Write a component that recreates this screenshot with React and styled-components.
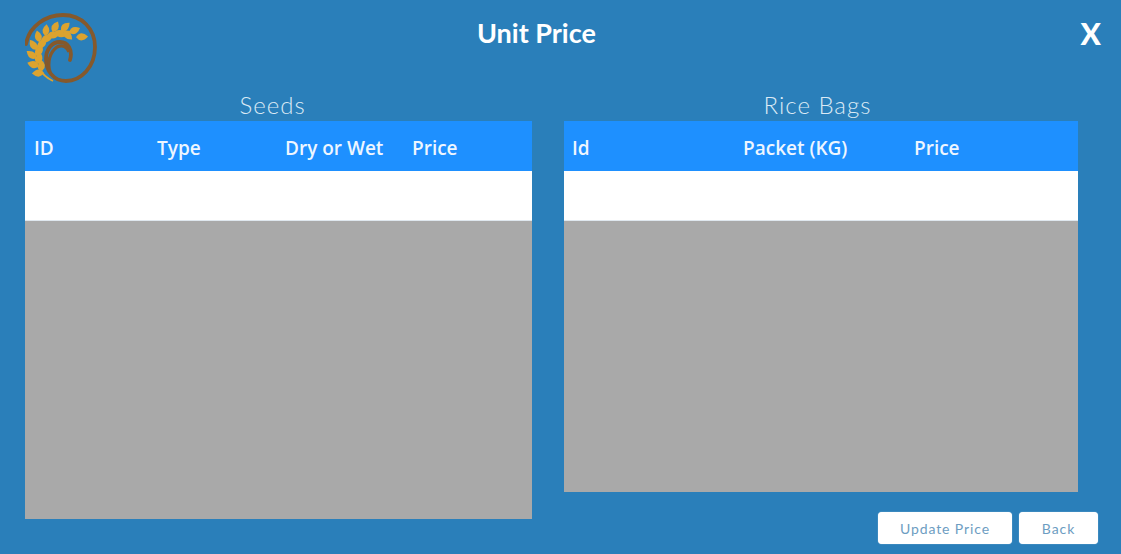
import React from "react";
import styled, { createGlobalStyle } from "styled-components";

const GlobalStyle = createGlobalStyle`
    html, body {
        margin: 0;
        padding: 0;
        background: #2a7fba;
    }
`;

const Page = styled.div`
    width: 1121px;
    height: 554px;
    overflow: hidden;
    background: #2a7fba;
    font-family: "Lato", "Open Sans", sans-serif;
    display: flex;
    flex-direction: column;
`;

const Header = styled.div`
    height: 91px;
    padding: 13px 20px 0 25px;
    box-sizing: border-box;
    display: grid;
    grid-template-columns: 452px 1fr auto;
    align-items: start;
`;

const Logo = styled.svg`
    width: 74px;
    height: 72px;
    display: block;
    filter: blur(0.4px);
`;

const Title = styled.div`
    color: #fff;
    font-size: 27px;
    font-weight: 700;
    line-height: 40px;
`;

const Close = styled.div`
    color: #fff;
    font-size: 30px;
    font-weight: 900;
    line-height: 40px;
`;

const Body = styled.div`
    display: flex;
    gap: 32px;
    padding-left: 25px;
`;

const Panel = styled.div`
    width: ${(p) => p.$width}px;
    display: flex;
    flex-direction: column;
`;

const PanelTitle = styled.div`
    color: #dbeaf5;
    font-size: 24px;
    font-weight: 300;
    letter-spacing: 1px;
    line-height: 28px;
    text-align: center;
    padding-right: ${(p) => p.$shift}px;
    padding-bottom: 2px;
`;

const Table = styled.div`
    width: ${(p) => p.$width}px;
    height: ${(p) => p.$height}px;
    background: #a9a9a9;
`;

const HeadRow = styled.div`
    height: 50px;
    background: #1e90ff;
    display: grid;
    grid-template-columns: ${(p) => p.$cols};
    align-items: center;
    color: #eef6ff;
    font-family: "Open Sans", sans-serif;
    font-size: 19px;
    font-weight: 600;
`;

const HeadCell = styled.div`
    padding-left: ${(p) => p.$pad}px;
    padding-top: 4px;
    white-space: nowrap;
`;

const EmptyRow = styled.div`
    height: 49px;
    background: #fff;
    border-bottom: 1px solid #dfe7ee;
`;

const Actions = styled.div`
    display: flex;
    justify-content: flex-end;
    gap: 7px;
    margin-top: 20px;
`;

const ActionButton = styled.button`
    width: ${(p) => p.$width}px;
    height: 32px;
    padding: 0;
    background: #fff;
    border: none;
    border-radius: 4px;
    box-shadow: 0 0 1px #d5e4ef;
    color: #6d9dc2;
    font-family: "Lato", sans-serif;
    font-size: 14px;
    letter-spacing: 0.9px;
`;

// grains sit on an arc round (60,55), angle in degrees going clockwise on screen
const stemAngles = [132, 152, 172, 192, 212, 232, 252, 272, 292, 312];

function Grain({ angle, spread }) {
  const rad = (angle * Math.PI) / 180;
  const x = 60 + 24 * Math.cos(rad);
  const y = 55 + 24 * Math.sin(rad);
  return (
    <path
      d="M0 0 Q5 -7 12 0 Q5 7 0 0"
      fill="#dca32f"
      transform={`translate(${x} ${y}) rotate(${angle + spread})`}
    />
  );
}

function WheatLogo() {
  return (
    <Logo viewBox="25 13 74 72">
      <path
        d="M26 44 C29 26 46 15 63 15 C82 15 95 29 95 47 C95 67 81 81 66 81 C53 81 46 70 46 59 C46 49 52 42 60 42 C68 42 73 50 70 60"
        fill="none"
        stroke="#85592c"
        strokeWidth="3.8"
        strokeLinecap="round"
      />
      <path
        d="M50 72 C47 62 50 52 57 47 C63 44 67 47 69 52"
        fill="none"
        stroke="#85592c"
        strokeWidth="3.2"
      />
      <path
        d="M53 81 C40 75 34 62 36 52 C39 37 56 27 75 33"
        fill="none"
        stroke="#dca32f"
        strokeWidth="1.8"
      />
      {stemAngles.map((a) => (
        <Grain key={`out-${a}`} angle={a} spread={45} />
      ))}
      {stemAngles.slice(0, 8).map((a) => (
        <Grain key={`in-${a}`} angle={a + 6} spread={125} />
      ))}
    </Logo>
  );
}

function PriceTable({ width, height, cols, pad, columns }) {
  return (
    <Table $width={width} $height={height}>
      <HeadRow $cols={cols}>
        {columns.map((c) => (
          <HeadCell key={c} $pad={pad}>{c}</HeadCell>
        ))}
      </HeadRow>
      <EmptyRow />
    </Table>
  );
}

function App() {
  return (
    <Page>
      <GlobalStyle />
      <Header>
        <WheatLogo />
        <Title>Unit Price</Title>
        <Close>X</Close>
      </Header>
      <Body>
        <Panel $width={507}>
          <PanelTitle $shift={12}>Seeds</PanelTitle>
          <PriceTable
            width={507}
            height={398}
            cols="123px 128px 127px 129px"
            pad={9}
            columns={["ID", "Type", "Dry or Wet", "Price"]}
          />
        </Panel>
        <Panel $width={534}>
          <PanelTitle $shift={27}>Rice Bags</PanelTitle>
          <PriceTable
            width={514}
            height={371}
            cols="171px 171px 172px"
            pad={8}
            columns={["Id", "Packet (KG)", "Price"]}
          />
          <Actions>
            <ActionButton $width={134}>Update Price</ActionButton>
            <ActionButton $width={79}>Back</ActionButton>
          </Actions>
        </Panel>
      </Body>
    </Page>
  );
}

export default App;
